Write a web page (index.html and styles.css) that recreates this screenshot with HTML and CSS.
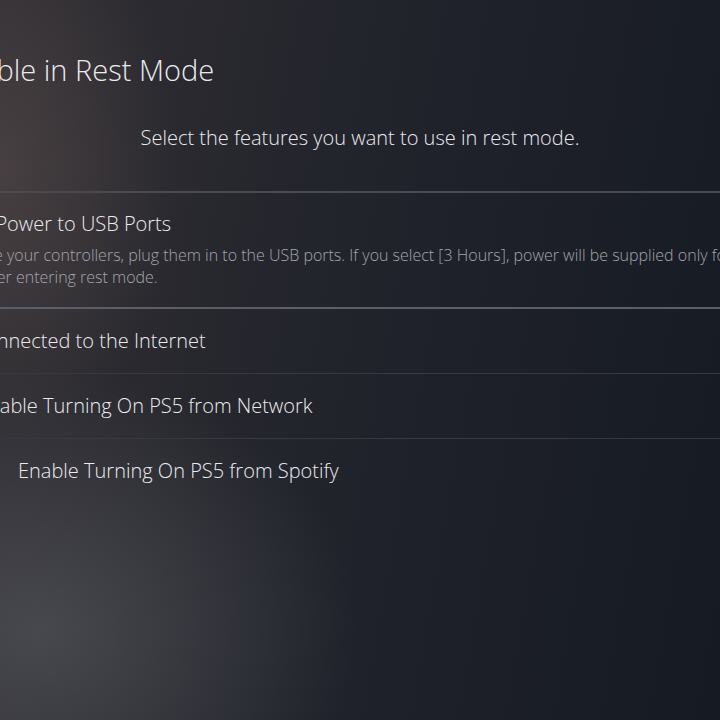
FILE: index.html
```html
<!DOCTYPE html>
<html lang="en">
<head>
<meta charset="utf-8">
<title>Features Available in Rest Mode</title>
<link rel="stylesheet" href="styles.css">
</head>
<body>
<main class="screen">
  <header class="head">
    <h1 class="title">Features Available in Rest Mode</h1>
    <p class="subtitle">Select the features you want to use in rest mode.</p>
  </header>
  <ul class="options">
    <li class="option option--detail">
      <span class="label label--usb">Supply Power to USB Ports</span>
      <span class="desc">To charge your controllers, plug them in to the USB ports. If you select [3 Hours], power will be supplied only for 3<br>hours after entering rest mode.</span>
    </li>
    <li class="option">
      <span class="label label--internet">Stay Connected to the Internet</span>
    </li>
    <li class="option">
      <span class="label label--network">Enable Turning On PS5 from Network</span>
    </li>
    <li class="option option--last">
      <span class="label label--spotify">Enable Turning On PS5 from Spotify</span>
    </li>
  </ul>
</main>
</body>
</html>
```

FILE: styles.css
```css
html, body {
  margin: 0;
  padding: 0;
}

body {
  width: 720px;
  height: 720px;
  overflow: hidden;
  font-family: "Open Sans", "Noto Sans", sans-serif;
  font-weight: 300;
  color: #eaebee;
  background-color: #181b24;
  background-image:
    radial-gradient(ellipse 320px 260px at 40px 630px, rgba(90, 92, 98, 0.6), rgba(90, 92, 98, 0) 100%),
    radial-gradient(ellipse 180px 280px at 0px 170px, rgba(96, 82, 80, 0.5), rgba(96, 82, 80, 0) 100%),
    linear-gradient(100deg, #302e33 0%, #29292f 25%, #1f222a 55%, #161a23 100%);
}

.screen {
  width: 720px;
  height: 720px;
  overflow: hidden;
  display: flex;
  flex-direction: column;
}

.head {
  display: flex;
  flex-direction: column;
}

.title {
  margin: 50px 0 0 -199px;
  font-size: 29px;
  font-weight: 300;
  line-height: 40px;
  white-space: nowrap;
}

.subtitle {
  margin: 35px 0 0;
  font-size: 20px;
  line-height: 26px;
  text-align: center;
  white-space: nowrap;
}

.options {
  list-style: none;
  margin: 40px 0 0;
  padding: 0;
  border-top: 2px solid #484b54;
}

.option {
  display: flex;
  align-items: center;
  height: 64px;
  border-bottom: 1px solid #363941;
  white-space: nowrap;
  font-size: 20px;
  line-height: 28px;
}

.option--detail {
  height: auto;
  flex-direction: column;
  align-items: flex-start;
  padding: 17px 0 19px;
  border-bottom: 2px solid #5a5e69;
}

.option--last {
  border-bottom: none;
}

.label {
  display: block;
}

.label--usb { margin-left: -70px; }
.label--internet { margin-left: -70px; }
.label--network { margin-left: -23px; }
.label--spotify { margin-left: 18px; }

.desc {
  display: block;
  margin: 6px 0 0 -68px;
  font-size: 16px;
  line-height: 22px;
  color: #a3a6ad;
}
```
